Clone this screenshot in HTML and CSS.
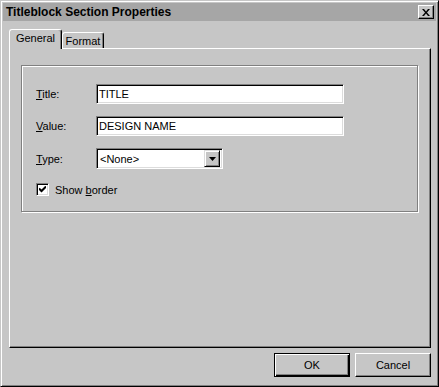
FILE: index.html
```html
<!DOCTYPE html>
<html lang="en">
<head>
    <meta charset="UTF-8">
    <title>Titleblock Section Properties</title>
    <link rel="stylesheet" href="styles.css">
</head>
<body>
    <div class="window">
        <div class="titlebar">
            <span class="title">Titleblock Section Properties</span>
            <button class="close" aria-label="Close">
                <svg width="8" height="7" viewBox="0 0 8 7">
                    <path d="M0 0h2l2 2.5L6 0h2L5 3.5 8 7H6L4 4.5 2 7H0l3-3.5z" fill="#000"/>
                </svg>
            </button>
        </div>

        <div class="content">
            <div class="tabs">
                <div class="tab active">General</div>
                <div class="tab">Format</div>
            </div>

            <div class="panel">
                <div class="group">
                    <div class="field">
                        <label for="title-input"><u>T</u>itle:</label>
                        <input type="text" id="title-input" value="TITLE">
                    </div>
                    <div class="field">
                        <label for="value-input"><u>V</u>alue:</label>
                        <input type="text" id="value-input" value="DESIGN NAME">
                    </div>
                    <div class="field">
                        <label><u>T</u>ype:</label>
                        <div class="combo">
                            <span class="combo-text">&lt;None&gt;</span>
                            <span class="combo-btn">
                                <svg width="7" height="4" viewBox="0 0 7 4"><path d="M0 0h7L3.5 4z" fill="#000"/></svg>
                            </span>
                        </div>
                    </div>
                    <div class="check-row">
                        <span class="checkbox">
                            <svg width="7" height="7" viewBox="0 0 7 7"><path d="M0 2.5l2.5 2.5L7 0.5" stroke="#000" stroke-width="2" fill="none"/></svg>
                        </span>
                        <span>Show <u>b</u>order</span>
                    </div>
                </div>
            </div>

            <div class="footer">
                <button class="btn default">OK</button>
                <button class="btn">Cancel</button>
            </div>
        </div>
    </div>
</body>
</html>
```

FILE: styles.css
```css
body {
    margin: 0;
    font-family: "Liberation Sans", Arial, sans-serif;
    font-size: 11px;
    color: #000;
    background-color: #c6c6c6;
}
.window {
    box-sizing: border-box;
    width: 439px;
    height: 387px;
    padding: 2px;
    background-color: #c6c6c6;
    border: 1px solid;
    border-color: #c6c6c6 #000 #000 #c6c6c6;
    box-shadow: inset 1px 1px 0 #fff, inset -1px -1px 0 #808080;
}
.titlebar {
    height: 18px;
    display: flex;
    align-items: center;
    justify-content: space-between;
    padding: 0 2px 0 3px;
    background-color: #a6a6a6;
}
.title {
    font-size: 12px;
    font-weight: bold;
}
.close {
    box-sizing: border-box;
    width: 16px;
    height: 14px;
    padding: 0;
    display: flex;
    align-items: center;
    justify-content: center;
    background-color: #c6c6c6;
    border: 1px solid;
    border-color: #fff #000 #000 #fff;
    box-shadow: inset -1px -1px 0 #808080;
}
.content {
    padding: 8px 6px 0 6px;
}
.tabs {
    height: 19px;
    display: flex;
    align-items: flex-end;
    position: relative;
    z-index: 1;
}
.tab {
    box-sizing: border-box;
    height: 16px;
    padding: 0 4px;
    display: flex;
    align-items: center;
    justify-content: center;
    border: 1px solid;
    border-bottom: none;
    border-color: #fff #000 #000 #fff;
    border-radius: 3px 3px 0 0;
    box-shadow: inset -1px 0 0 #808080;
    background-color: #c6c6c6;
}
.tab.active {
    width: 53px;
    height: 20px;
    margin-bottom: -1px;
    padding-bottom: 3px;
}
.tab:not(.active) {
    width: 42px;
}
.panel {
    box-sizing: border-box;
    width: 422px;
    height: 300px;
    padding: 16px 0 0 11px;
    border: 1px solid;
    border-color: #fff #000 #000 #fff;
    box-shadow: inset -1px -1px 0 #808080;
}
.group {
    box-sizing: border-box;
    width: 397px;
    height: 147px;
    padding: 18px 0 0 14px;
    border: 1px solid #808080;
    box-shadow: 1px 1px 0 #fff, inset 1px 1px 0 #fff;
    display: flex;
    flex-direction: column;
    gap: 12px;
}
.field {
    display: flex;
    align-items: center;
}
.field label {
    width: 60px;
}
input[type="text"] {
    box-sizing: border-box;
    width: 248px;
    height: 20px;
    margin: 0;
    padding: 0 2px;
    font-family: inherit;
    font-size: 11px;
    color: #000;
    background-color: #fff;
    border: 1px solid;
    border-color: #808080 #fff #fff #808080;
    box-shadow: inset 1px 1px 0 #000, inset -1px -1px 0 #dcdcdc;
    outline: none;
}
.combo {
    box-sizing: border-box;
    width: 127px;
    height: 21px;
    padding: 2px 2px 2px 3px;
    display: flex;
    align-items: center;
    justify-content: space-between;
    background-color: #fff;
    border: 1px solid;
    border-color: #808080 #fff #fff #808080;
    box-shadow: inset 1px 1px 0 #000, inset -1px -1px 0 #dcdcdc;
}
.combo-btn {
    box-sizing: border-box;
    width: 16px;
    height: 17px;
    display: flex;
    align-items: center;
    justify-content: center;
    background-color: #c6c6c6;
    border: 1px solid;
    border-color: #dcdcdc #000 #000 #dcdcdc;
    box-shadow: inset 1px 1px 0 #fff, inset -1px -1px 0 #808080;
}
.check-row {
    margin-top: 2px;
    display: flex;
    align-items: center;
    gap: 6px;
}
.checkbox {
    box-sizing: border-box;
    width: 13px;
    height: 13px;
    display: flex;
    align-items: center;
    justify-content: center;
    background-color: #fff;
    border: 1px solid;
    border-color: #808080 #fff #fff #808080;
    box-shadow: inset 1px 1px 0 #000, inset -1px -1px 0 #dcdcdc;
}
.footer {
    margin-top: 5px;
    width: 422px;
    display: flex;
    justify-content: flex-end;
    gap: 5px;
}
.btn {
    box-sizing: border-box;
    width: 76px;
    height: 24px;
    padding: 0;
    font-family: inherit;
    font-size: 11px;
    color: #000;
    background-color: #c6c6c6;
    border: 1px solid;
    border-color: #fff #000 #000 #fff;
    box-shadow: inset -1px -1px 0 #808080;
}
.btn.default {
    border-color: #000;
    box-shadow: inset 1px 1px 0 #fff, inset -1px -1px 0 #000, inset -2px -2px 0 #808080;
}
```
